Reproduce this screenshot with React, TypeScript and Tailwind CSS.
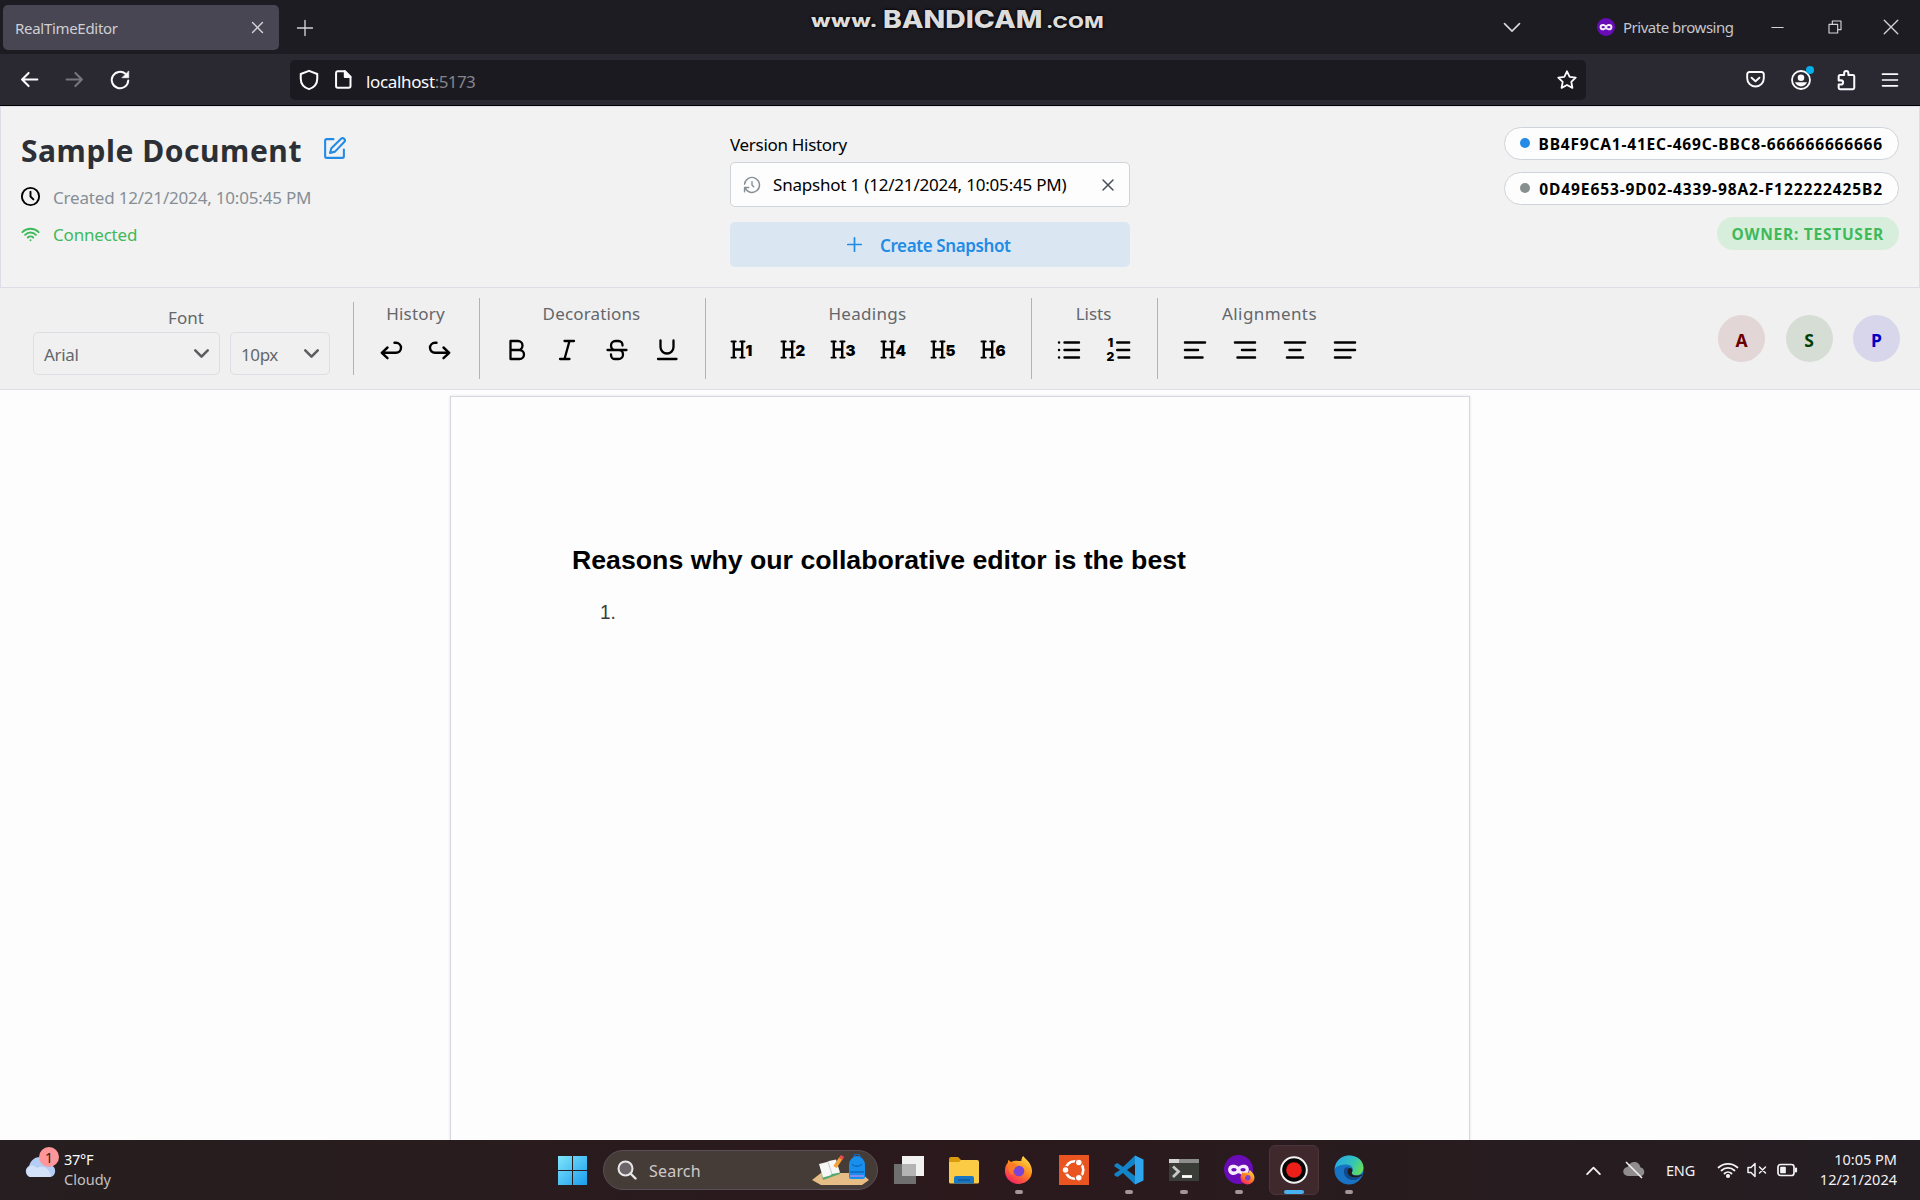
import React, { ReactNode } from "react";
import { TbClock, TbWifi, TbHistory, TbX, TbPlus, TbChevronDown } from "react-icons/tb";

const stroke = {
  fill: "none",
  stroke: "currentColor",
  strokeLinecap: "round" as const,
  strokeLinejoin: "round" as const,
};

function Icon({ d, w = 2, className = "size-6" }: { d: string; w?: number; className?: string }) {
  return (
    <svg viewBox="0 0 24 24" className={`shrink-0 ${className}`} {...stroke} strokeWidth={w}>
      <path d={d} />
    </svg>
  );
}

/* ---------- Browser chrome ---------- */

function MaskBadge({ className }: { className: string }) {
  return (
    <svg viewBox="0 0 28 28" className={className}>
      <circle cx="14" cy="14" r="14" fill="#6a0bb8" />
      <path
        d="M14 11.3c-1.6-1.5-3.2-2-5-2-3 0-5 2-5 4.6 0 3 2.200 5.300 5 5.300 2.300 0 3.400-1.700 5-1.700s2.700 1.700 5 1.700c2.800 0 5-2.300 5-5.300 0-2.600-2-4.600-5-4.600-1.800 0-3.400.5-5 2z"
        fill="#f4ecfa"
      />
      <ellipse cx="9.600" cy="14.200" rx="2.600" ry="1.700" fill="#6a0bb8" />
      <ellipse cx="18.400" cy="14.200" rx="2.600" ry="1.700" fill="#6a0bb8" />
    </svg>
  );
}

function Watermark() {
  return (
    <div className="absolute left-[811px] top-[1px] flex h-[36px] w-[300px] font-[Inter] font-extrabold text-[#dcdcdc] [text-shadow:0_0_3px_#000,0_0_2px_#000]">
      <span className="w-[72px] origin-left scale-x-[1.26] pt-[5px] text-[18px] leading-[30px] tracking-[0.4px]">www.</span>
      <span className="w-[163px] origin-left scale-x-[1.18] text-[24px] leading-[38px]">BANDICAM</span>
      <span className="origin-left scale-x-[1.28] pt-[5px] text-[16px] leading-[32px] tracking-[0.2px]">.COM</span>
    </div>
  );
}

function TabBar() {
  return (
    <div className="relative flex h-[54px] items-center bg-[#1d1c23] pr-[20px] text-[#d4d4d8]">
      <div className="ml-[3px] flex h-[45px] w-[276px] items-center justify-between rounded-[5px] bg-[#484653] pl-[12px] pr-[13px]">
        <span className="mt-[1px] text-[15px] leading-[20px] tracking-[-0.300px] text-[#cfcfd4]">RealTimeEditor</span>
        <Icon d="M5 5l14 14M19 5L5 19" w={2} className="size-[17px]" />
      </div>
      <Icon d="M12 2v20M2 12h20" w={1.800} className="ml-[17px] mt-[2px] size-[18px]" />
      <Watermark />
      <div className="ml-auto flex items-center">
        <Icon d="M3 8l9 9 9-9" w={2} className="mr-[75px] size-[20px]" />
        <MaskBadge className="size-[18px]" />
        <span className="ml-[8px] w-[110px] whitespace-nowrap text-[15px] leading-[20px] tracking-[-0.480px] text-[#c6c6cb]">
          Private browsing
        </span>
        <Icon d="M4 12h16" w={1.500} className="ml-[36px] size-[17px]" />
        <Icon d="M3 8h13v13H3zM8 8V3h13v13h-5" w={1.700} className="ml-[41px] size-[16px]" />
        <Icon d="M3 3l18 18M21 3L3 21" w={1.800} className="ml-[39px] size-[18px]" />
      </div>
    </div>
  );
}

function NavBar() {
  return (
    <div className="flex h-[52px] items-center border-b border-black bg-[#2a2932] text-[#fbfbfe]">
      <div className="flex w-[290px] items-center gap-[24px] pl-[19px]">
        <Icon d="M21 12H3.500M11 4.500L3.500 12l7.500 7.500" w={2.300} className="size-[21px]" />
        <Icon d="M3 12h17.500M13 4.500l7.500 7.500-7.500 7.500" w={2.300} className="size-[21px] text-[#77767f]" />
        <svg viewBox="0 0 24 24" className="size-[22px]" {...stroke} strokeWidth="2.200">
          <path d="M21 12.500a9 9 0 1 1-3-7.200" />
          <path d="M21.500 2.500v7h-7z" fill="currentColor" strokeWidth="0.800" />
        </svg>
      </div>
      <div className="flex h-[40px] w-[1296px] items-center rounded-[5px] bg-[#1b1a21] pl-[8px] pr-[8px]">
        <Icon d="M12 2l9 3.500v5c0 5-3.500 9.500-9 11.500-5.500-2-9-6.500-9-11.500v-5z" w={2.200} className="size-[22px]" />
        <svg viewBox="0 0 24 24" className="ml-[13px] size-[21px]" {...stroke} strokeWidth="2.300">
          <path d="M5 2.500h8.500L20 9v10.500a2 2 0 0 1-2 2H5.500a2 2 0 0 1-2-2V4.500a2 2 0 0 1 1.500-2z" />
          <path d="M13.500 2.500V9H20z" fill="currentColor" />
        </svg>
        <span className="ml-[12px] mt-[4px] text-[17px] leading-[24px] tracking-[-0.350px]">
          localhost<span className="tracking-[-0.600px] text-[#85848c]">:5173</span>
        </span>
        <Icon
          d="M12 2.500l2.900 6 6.600.9-4.800 4.600 1.200 6.600-5.900-3.200-5.900 3.200 1.200-6.600L2.500 9.400l6.600-.9z"
          w={2}
          className="ml-auto size-[22px]"
        />
      </div>
      <div className="ml-auto flex items-center gap-[23px] pr-[20px]">
        <Icon d="M5 3.500h14a2.500 2.500 0 0 1 2.500 2.500v4.500a9.500 9.500 0 0 1-19 0V6A2.500 2.500 0 0 1 5 3.500zM7.500 10l4.500 4 4.500-4" w={2.200} className="mr-[1px] size-[21px]" />
        <div className="relative size-[22px]">
          <svg viewBox="0 0 24 24" className="size-[22px]">
            <circle cx="12" cy="12" r="9.800" fill="none" stroke="currentColor" strokeWidth="2" />
            <circle cx="12" cy="9.500" r="3.600" fill="currentColor" />
            <path d="M5.500 14.500h13c-1 3-3.500 4.500-6.500 4.500s-5.500-1.500-6.500-4.500z" fill="currentColor" />
          </svg>
          <i className="absolute -top-[3px] left-[16px] size-[8px] rounded-full bg-[#04aee8]" />
        </div>
        <Icon
          d="M4 9.500V8a1.500 1.500 0 0 1 1.500-1.500H10V4.500a2.300 2.300 0 0 1 4.600 0v2h4.900A1.500 1.500 0 0 1 21 8v12.500a1.500 1.500 0 0 1-1.500 1.500h-14A1.500 1.500 0 0 1 4 20.500V17h2.500a2.300 2.300 0 0 0 0-4.600H4z"
          w={2.200}
          className="size-[22px]"
        />
        <Icon d="M3 5h18M3 12h18M3 19h18" w={2} className="size-[20px]" />
      </div>
    </div>
  );
}

/* ---------- Document header ---------- */

function UserBadge({ id, dot, tracking }: { id: string; dot: string; tracking: string }) {
  return (
    <div className="flex h-[33px] items-center rounded-full border border-[#ced4da] bg-[#fdfdfd] pl-[15px] pr-[15px] text-[15.500px] font-bold text-black">
      <span className={`mb-[2px] mr-[9px] size-[10px] rounded-full ${dot}`} />
      <span className={`mt-[2px] ${tracking}`}>{id}</span>
    </div>
  );
}

function DocumentHeader() {
  return (
    <div className="grid h-[182px] grid-cols-[729px_400px_1fr] border border-[#dcdde6] bg-[#f2f2f2]">
      <div className="pl-[20px] pt-[22px]">
        <div className="flex h-[41px] items-center">
          <h1 className="mt-[2px] w-[283px] whitespace-nowrap text-[30px] font-bold leading-[41px] tracking-[0.550px] text-[#2c3036]">Sample Document</h1>
          <Icon
            d="M11 3H4.500A1.500 1.500 0 0 0 3 4.500v15A1.500 1.500 0 0 0 4.500 21h15a1.500 1.500 0 0 0 1.500-1.500V13M18.300 2.700a2.100 2.100 0 0 1 3 3L12.500 15l-4.800 1.300L9 11.800z"
            className="ml-[18px] mt-[-2px] size-[25px] text-[#228be6]"
          />
        </div>
        <div className="mt-[9px] flex h-[37px] items-center text-[17px] tracking-[-0.190px] text-[#868e96]">
          <TbClock className="-ml-[2px] mr-[11px] mt-[-2px] size-[23px] text-black" />
          Created 12/21/2024, 10:05:45 PM
        </div>
        <div className="flex h-[37px] items-center text-[17px] tracking-[-0.200px] text-[#40b95a]">
          <TbWifi className="-ml-[2px] mr-[11px] size-[23px]" />
          Connected
        </div>
      </div>

      <div className="pt-[23px]">
        <div className="h-[32px] text-[17px] leading-[30px] tracking-[-0.300px] text-black">Version History</div>
        <div className="flex h-[45px] items-center rounded-[5px] border border-[#ced4da] bg-[#fdfdfd] pl-[11px] pr-[11px] text-[17px]">
          <TbHistory className="size-[20px] text-[#868e96]" strokeWidth={1.700} />
          <span className="ml-[11px] mt-[1px] tracking-[-0.200px] text-black">Snapshot 1 (12/21/2024, 10:05:45 PM)</span>
          <TbX className="ml-auto size-[20px] text-[#495057]" strokeWidth={1.800} />
        </div>
        <button className="mt-[15px] flex h-[45px] w-full items-center rounded-[5px] bg-[#dae7f2] pl-[113px] text-[17px] font-semibold tracking-[-0.390px] text-[#228be6]">
          <TbPlus className="size-[23px]" strokeWidth={1.800} />
          <span className="ml-[14px] mt-[2px]">Create Snapshot</span>
        </button>
      </div>

      <div className="flex flex-col items-end gap-[12px] pr-[20px] pt-[20px]">
        <UserBadge id="BB4F9CA1-41EC-469C-BBC8-666666666666" dot="bg-[#228be6]" tracking="tracking-[0.820px]" />
        <UserBadge id="0D49E653-9D02-4339-98A2-F122222425B2" dot="bg-[#868e8e]" tracking="tracking-[0.900px]" />
        <div className="flex h-[33px] items-center rounded-full bg-[#d8eedc] pl-[15px] pr-[15px] pt-[2px] text-[15.500px] font-bold tracking-[0.750px] text-[#40b95a]">
          OWNER: TESTUSER
        </div>
      </div>
    </div>
  );
}

/* ---------- Formatting toolbar ---------- */

function Group({ label, width, gap, children }: { label: string; width: string; gap: string; children: ReactNode }) {
  return (
    <div className={`mt-[10px] flex h-[81px] shrink-0 flex-col items-center pr-[2px] ${width}`}>
      <span className="mt-[4px] h-[24px] text-[17px] leading-[24px]">{label}</span>
      <div className={`mt-[12px] flex h-[24px] items-center text-black ${gap}`}>{children}</div>
    </div>
  );
}

function Divider({ className = "mt-[10px] h-[81px]" }: { className?: string }) {
  return <div className={`w-px shrink-0 bg-[#b0b3b8] ${className}`} />;
}

function Heading({ level }: { level: number }) {
  return (
    <div className="flex h-[24px] w-[26px] items-end pb-[3px]">
      <svg viewBox="0 0 16 20" preserveAspectRatio="none" className="h-[19px] w-[16px] shrink-0" {...stroke} strokeWidth="2.400">
        <path d="M3.800 2v16M12.200 2v16M3.800 10h8.400" />
        <path d="M1.500 1.500h4.200M10.300 1.500h4.200M1.500 18.500h4.200M10.300 18.500h4.200" strokeWidth="2" />
      </svg>
      <span className="font-[Inter] text-[15px] font-black leading-[16px]">{level}</span>
    </div>
  );
}

function FontSelect({ value, className }: { value: string; className: string }) {
  return (
    <div className={`flex h-[43px] items-center justify-between rounded-[5px] border border-[#dcdee3] text-[17px] ${className}`}>
      <span className="mt-[2px]">{value}</span>
      <TbChevronDown className="size-[25px] text-[#5b5d60]" strokeWidth={2.500} />
    </div>
  );
}

function Avatar({ letter, className }: { letter: string; className: string }) {
  return (
    <div className={`flex size-[47px] items-center justify-center rounded-full pt-[3px] text-[17.500px] font-bold ${className}`}>{letter}</div>
  );
}

function Toolbar() {
  return (
    <div className="flex h-[102px] border-b border-[#dcdde6] bg-[#f0f0f0] text-[#63676c]">
      <div className="ml-[33px] w-[320px] shrink-0 pt-[17px]">
        <div className="h-[27px] w-[306px] text-center text-[17px] leading-[25px]">Font</div>
        <div className="flex gap-[10px]">
          <FontSelect value="Arial" className="w-[187px] pl-[10px] pr-[5px] tracking-[-0.300px]" />
          <FontSelect value="10px" className="w-[100px] pl-[10px] pr-[5px] tracking-[-0.400px]" />
        </div>
      </div>
      <Divider className="mt-[14px] h-[73px]" />

      <Group label="History" width="w-[125px] tracking-[0.200px]" gap="gap-[25px]">
        <Icon d="M8.500 9.500L2.800 14.800 8.500 20.200M2.800 14.800H17a5 5 0 0 0 0-10h-1.500" w={2.400} />
        <Icon d="M15.500 9.500l5.700 5.300-5.700 5.400M21.200 14.800H7a5 5 0 0 1 0-10h1.500" w={2.400} />
      </Group>
      <Divider />

      <Group label="Decorations" width="w-[225px] tracking-[0.150px]" gap="gap-[26px]">
        <Icon d="M5.500 3v18h9a4.500 4.500 0 0 0 0-9h-9M5.500 3H13a4.500 4.500 0 0 1 0 9" w={2.300} />
        <Icon d="M9.500 3h9.500M5 21h9.500M14.500 3l-5 18" w={2.300} />
        <Icon d="M17.500 7.500V7a4 4 0 0 0-4-4h-3a4.500 4.500 0 0 0-4.500 4.500c0 2.500 2 4.500 4.500 4.500M2.500 12h19M14 12c2.200 0 4 2 4 4.500a4.500 4.500 0 0 1-4.500 4.500h-3.500a4 4 0 0 1-4-4v-.5" w={2.300} />
        <Icon d="M5.500 2.500V9a6.500 6.500 0 0 0 13 0V2.500M3 21h18.500" w={2.300} />
      </Group>
      <Divider />

      <Group label="Headings" width="w-[325px] tracking-[0.300px]" gap="gap-[24px]">
        {[1, 2, 3, 4, 5, 6].map((level) => (
          <Heading key={level} level={level} />
        ))}
      </Group>
      <Divider />

      <Group label="Lists" width="w-[125px]" gap="gap-[26px]">
        <Icon d="M7.500 4.500H22M7.500 12H22M7.500 19.500H22M2 4.500h.1M2 12h.1M2 19.500h.1" w={2.400} />
        <div className="flex h-[24px] w-[24px] gap-[1px]">
          <div className="mt-[-2px] flex w-[8px] flex-col items-center font-[Inter] text-[12px] font-black leading-[14px]">
            <span>1</span>
            <span>2</span>
          </div>
          <svg viewBox="0 0 15 24" className="h-[24px] w-[15px] shrink-0" {...stroke} strokeWidth="2.400">
            <path d="M1.200 4.500h12M1.200 12h12M2.500 19.500h10.700" />
          </svg>
        </div>
      </Group>
      <Divider />

      <Group label="Alignments" width="w-[225px] tracking-[0.400px]" gap="gap-[26px]">
        <Icon d="M2 4.500h20M2 12h13M2 19.500h17.500" w={2.500} />
        <Icon d="M2 4.500h20M9 12h13M4.500 19.500H22" w={2.500} />
        <Icon d="M2 4.500h20M6.500 12h11M4 19.500h16" w={2.500} />
        <Icon d="M2 4.500h20M2 12h20M2 19.500h15.500" w={2.500} />
      </Group>

      <div className="ml-auto flex gap-[20.500px] pr-[20px] pt-[27px]">
        <Avatar letter="A" className="bg-[#e2d6d6] text-[#6b0000]" />
        <Avatar letter="S" className="bg-[#d5ddd5] text-[#003f00]" />
        <Avatar letter="P" className="bg-[#d8d6ea] text-[#0000c4]" />
      </div>
    </div>
  );
}

/* ---------- Taskbar ---------- */

function Slot({ children, running, active }: { children: ReactNode; running?: boolean; active?: boolean }) {
  return (
    <div className="flex w-[55px] shrink-0 justify-center">
      <div
        className={`relative flex h-[50px] w-[50px] items-center justify-center ${
          active ? "rounded-[6px] border border-[#4a363a] bg-[#40292d]" : ""
        }`}
      >
        {children}
        {running && <i className="absolute bottom-[1px] h-[4px] w-[8px] rounded-full bg-[#a39599]" />}
        {active && <i className="absolute bottom-0 h-[4px] w-[20px] rounded-full bg-[#48b2f0]" />}
      </div>
    </div>
  );
}

function Firefox({ className }: { className: string }) {
  return (
    <svg viewBox="0 0 30 30" className={className}>
      <defs>
        <linearGradient id="fx" x1="0.800" y1="0" x2="0.200" y2="1">
          <stop offset="0" stopColor="#ffe14a" />
          <stop offset="0.450" stopColor="#ff8a1e" />
          <stop offset="1" stopColor="#f5196a" />
        </linearGradient>
      </defs>
      <path
        d="M18 5c0-2.500 1-4 2-5 1.200 3 8.500 6 9 15a14 13.500 0 0 1-28 1C.8 12 2 9 4 7c0-1.500.5-2.500 1-3 .5 1.500 1.500 2 2.500 2.200 2-1.200 4-1.500 6-1.200 1.500.2 3 .3 4.500 0z"
        fill="url(#fx)"
      />
      <circle cx="15.500" cy="15.500" r="5.500" fill="#7b43d6" />
      <path d="M5 8c3-1 7-.5 9 2.500-2 .5-3 2-3.500 3.500-2 .5-2.500 4 .5 5.500-5 0-8-6-6-11.500z" fill="#ff7a25" />
    </svg>
  );
}

function VSCode() {
  return (
    <svg viewBox="0 0 30 30" className="size-[30px]">
      <path d="M21 0.500L9 12 3.500 8 0.500 9.500v2L6 15l-5.500 3.500v2L3.500 22 9 18l12 11.500V21L13 15l8-6z" fill="#1484c8" />
      <path d="M21 0.500l8.500 4v21l-8.500 4z" fill="#2fa5ee" />
    </svg>
  );
}

function Edge() {
  return (
    <svg viewBox="0 0 30 30" className="size-[30px]">
      <defs>
        <linearGradient id="edgeTop" x1="0" y1="0.200" x2="1" y2="0.600">
          <stop offset="0" stopColor="#27a8e6" />
          <stop offset="0.600" stopColor="#33c4b8" />
          <stop offset="1" stopColor="#66dc5a" />
        </linearGradient>
      </defs>
      <circle cx="15" cy="15" r="14.500" fill="#1873c4" />
      <path d="M.6 14C1.500 5.500 8 .5 15 .5c8.500 0 14.500 5.500 14.500 12 0 5-3.500 7.800-7.500 7.800-3 0-5-1.300-4-3 2.500-4-1-7.800-5-7.800C7.500 9.500 3 10.500.6 14z" fill="url(#edgeTop)" />
      <path d="M11 13c-3 4 0 11 6.500 12 4 .5 7-.8 9.500-3-2.500 1-9.500 1.800-11.500-2.500-1-2.200 0-4 1.500-4.500-1.500-3-4.500-3.500-6-2z" fill="#0f4a8c" />
      <path d="M14 14.500c-1.500 4 1.500 8 7 8 3 0 5-.8 6.500-1.800l1.500-2.200c-2 1.800-4.500 2.300-7 2-3-.3-5-1.500-4-3.300.6-1.200.4-2.200 0-3.200-1-1.500-3-1.500-4 .5z" fill="#231a1d" />
    </svg>
  );
}

function SearchArt() {
  return (
    <svg viewBox="0 0 58 32" className="ml-auto h-[32px] w-[58px]">
      <path d="M0 26l9-7h40l8 7-7 5H9z" fill="#e6bd84" />
      <path d="M8 12l16-5 4 13-17 6z" fill="#55a873" />
      <path d="M7 10l8-2 2-1 7-1.500 4 13-8 1.500-2 1.500-7 2z" fill="#f7f7f5" />
      <path d="M16 8l4 12" stroke="#c5c8cc" strokeWidth="1" />
      <path d="M29 4l-6 9" stroke="#f5a23a" strokeWidth="4" />
      <path d="M30.500 2l-2 3" stroke="#ea4f45" strokeWidth="4" />
      <path d="M42 3a3 3 0 0 1 6 0" fill="none" stroke="#1765b8" strokeWidth="1.500" />
      <path d="M37 11a8 9 0 0 1 16 0v12a2 2 0 0 1-2 2H39a2 2 0 0 1-2-2z" fill="#188fec" />
      <path d="M40 10c2 3 8 3 10 0M38 18h14" fill="none" stroke="#0e66bd" strokeWidth="1.300" />
      <path d="M38 22h14" stroke="#a88af0" strokeWidth="1.500" />
    </svg>
  );
}

function Taskbar() {
  return (
    <div className="flex h-[60px] items-center bg-linear-to-r from-[#261e20] via-[#2b191c] to-[#241e22]">
      <div className="flex w-[544px] shrink-0 pl-[24px]">
        <div className="relative h-[40px] w-[40px]">
          <svg viewBox="0 0 32 22" className="absolute left-0 top-[6px] h-[22px] w-[32px]">
            <path d="M6 21a6 6 0 0 1-1-11C7 4 11 1 16 1c6 0 9 4 9.500 8 8 .5 7 12 0 12z" fill="#b3cdf5" />
            <path d="M6 21a6 6 0 0 1 0-11c3-1 5 0 7 2 6-3 12 0 14 8l-2 1z" fill="#d3e2f8" />
          </svg>
          <div className="absolute left-[15px] top-[-3px] flex size-[20px] items-center justify-center rounded-full bg-[#ff979a] text-[14px] text-[#2c1a1c]">
            1
          </div>
        </div>
        <div className="-mt-[1px] text-[14.500px] leading-[20px]">
          <div className="tracking-[-0.300px] text-white">37°F</div>
          <div className="text-[#c4c0c1]">Cloudy</div>
        </div>
      </div>

      <Slot>
        <svg viewBox="0 0 29 29" className="ml-[1px] size-[29px]">
          <defs>
            <linearGradient id="win" x1="0" y1="0" x2="1" y2="1">
              <stop offset="0" stopColor="#7fe6fb" />
              <stop offset="1" stopColor="#1a9bee" />
            </linearGradient>
          </defs>
          <path d="M0 0h14v14H0zM15 0h14v14H15zM0 15h14v14H0zM15 15h14v14H15z" fill="url(#win)" />
        </svg>
      </Slot>
      <div className="ml-[4px] mr-[3px] flex h-[40px] w-[275px] shrink-0 items-center rounded-full border border-[#5a4f58] bg-[#453c37] pl-[13px] pr-[7px]">
        <svg viewBox="0 0 20 20" className="size-[20px]" {...stroke} strokeWidth="2" color="#e8e8e8">
          <circle cx="8.500" cy="8.500" r="7" fill="#6b6469" />
          <path d="M13.500 13.500l5 5" strokeWidth="2.400" />
        </svg>
        <span className="ml-[12px] mt-[2px] text-[16px] tracking-[0.200px] text-[#cfcac8]">Search</span>
        <SearchArt />
      </div>
      <Slot>
        <svg viewBox="0 0 30 28" className="h-[28px] w-[30px]">
          <path d="M8 0h22v20H8z" fill="#f1f1f1" />
          <path d="M0 8h22v20H0z" fill="#6f6f6f" />
          <path d="M8 8h14v12H8z" fill="#b4b4b4" />
        </svg>
      </Slot>
      <Slot>
        <svg viewBox="0 0 30 27" className="h-[27px] w-[30px]">
          <path d="M0 2a2 2 0 0 1 2-2h7l3 3v4H0z" fill="#d99a0c" />
          <path d="M0 5h10l2-2h16a2 2 0 0 1 2 2v20a1.500 1.500 0 0 1-1.500 1.500h-27A1.500 1.500 0 0 1 0 25z" fill="#fbcb45" />
          <path d="M5 26.500V21a2 2 0 0 1 2-2h16a2 2 0 0 1 2 2v5.500z" fill="#1976c2" />
          <path d="M9 23h12" stroke="#0f5a9c" strokeWidth="1.500" />
        </svg>
      </Slot>
      <Slot running>
        <Firefox className="size-[29px]" />
      </Slot>
      <Slot>
        <svg viewBox="0 0 30 30" className="size-[30px]">
          <path d="M0 0h30v30H0z" fill="#e95420" />
          <circle cx="15.500" cy="15" r="8.800" fill="none" stroke="#fff" strokeWidth="2.600" />
          <g fill="#fff" stroke="#e95420" strokeWidth="1.300">
            <circle cx="6.500" cy="15" r="3.400" />
            <circle cx="19.800" cy="7.500" r="3.400" />
            <circle cx="19.800" cy="22.800" r="3.400" />
          </g>
        </svg>
      </Slot>
      <Slot running>
        <VSCode />
      </Slot>
      <Slot running>
        <svg viewBox="0 0 30 22" className="h-[22px] w-[30px]">
          <path d="M0 0h30v22H0z" fill="#3a3d38" />
          <path d="M0 0h30v4H0z" fill="#8d8d8d" />
          <path d="M0 0h10v4H0z" fill="#d5d5d5" />
          <path d="M4 7.500l5.500 5L4 18" fill="none" stroke="#c9c9c9" strokeWidth="2.800" />
          <path d="M13 17.500h10" stroke="#fff" strokeWidth="2.800" />
        </svg>
      </Slot>
      <Slot running>
        <div className="relative size-[30px]">
          <MaskBadge className="size-[29px]" />
          <Firefox className="absolute -right-[1px] bottom-0 size-[15px]" />
        </div>
      </Slot>
      <Slot active>
        <svg viewBox="0 0 28 28" className="size-[28px]">
          <circle cx="14" cy="14" r="12.800" fill="#050505" stroke="#f3f3f3" strokeWidth="2" />
          <circle cx="14" cy="14" r="7.800" fill="#ea1f1a" />
        </svg>
      </Slot>
      <Slot running>
        <Edge />
      </Slot>

      <div className="ml-auto flex items-center pr-[23px] text-[#f3f1f2]">
        <Icon d="M3 17l9-9 9 9" w={2.600} className="size-[17px]" />
        <svg viewBox="0 0 22 18" className="ml-[21px] h-[18px] w-[22px]">
          <path d="M5 15a4.500 4.500 0 0 1-.5-9C6 2.500 8.500 1 11.500 1 15 1 17 3.500 17.500 6.500c5 .5 5 8.500 0 8.500z" fill="#918c8e" />
          <path d="M3 1l16 16" stroke="#f0f0f0" strokeWidth="1.600" />
        </svg>
        <span className="ml-[21px] w-[31px] text-[14.500px] leading-[20px] tracking-[-0.200px]">ENG</span>
        <svg viewBox="0 0 22 18" className="ml-[20px] h-[18px] w-[22px]" {...stroke} strokeWidth="1.800">
          <path d="M1.500 6.500a14 14 0 0 1 19 0M4.500 9.500a9.500 9.500 0 0 1 13 0M7.500 12.500a5 5 0 0 1 7 0" />
          <circle cx="11" cy="15" r="1.200" fill="currentColor" />
        </svg>
        <svg viewBox="0 0 20 16" className="ml-[8px] h-[16px] w-[20px]" {...stroke} strokeWidth="1.500">
          <path d="M1 5.500h3l4-4v13l-4-4H1zM12.500 5l6 6M18.500 5l-6 6" />
        </svg>
        <svg viewBox="0 0 21 14" className="ml-[10px] h-[14px] w-[21px]" {...stroke} strokeWidth="1.700">
          <rect x="1" y="1.500" width="16" height="11" rx="2.500" />
          <path d="M4 4.500h4v5H4z" fill="currentColor" />
          <path d="M19 5.500v3" strokeWidth="2.200" />
        </svg>
        <div className="-mt-[2px] ml-[19px] w-[80px] whitespace-nowrap text-right text-[14.500px] leading-[20px]">
          <div>10:05 PM</div>
          <div>12/21/2024</div>
        </div>
      </div>
    </div>
  );
}

export default function App() {
  return (
    <div className="flex h-[1200px] w-[1920px] flex-col overflow-hidden bg-[#fdfdfd] font-['Noto_Sans',sans-serif]">
      <TabBar />
      <NavBar />
      <DocumentHeader />
      <Toolbar />
      <main className="flex min-h-0 flex-1 justify-center pt-[6px]">
        <div className="w-[1020px] border border-b-0 border-[#d6d7dc] pl-[121px] pt-[146px] font-['Liberation_Sans',sans-serif] shadow-[0_0_3px_#e4e4ea]">
          <h2 className="text-[26.700px] font-bold leading-[34px] text-black">Reasons why our collaborative editor is the best</h2>
          <ol className="mt-[23px] pl-[28px] text-[20px] leading-[24px] text-[#3a3a3a]">
            <li className="origin-left scale-x-95">1.</li>
          </ol>
        </div>
      </main>
      <Taskbar />
    </div>
  );
}
